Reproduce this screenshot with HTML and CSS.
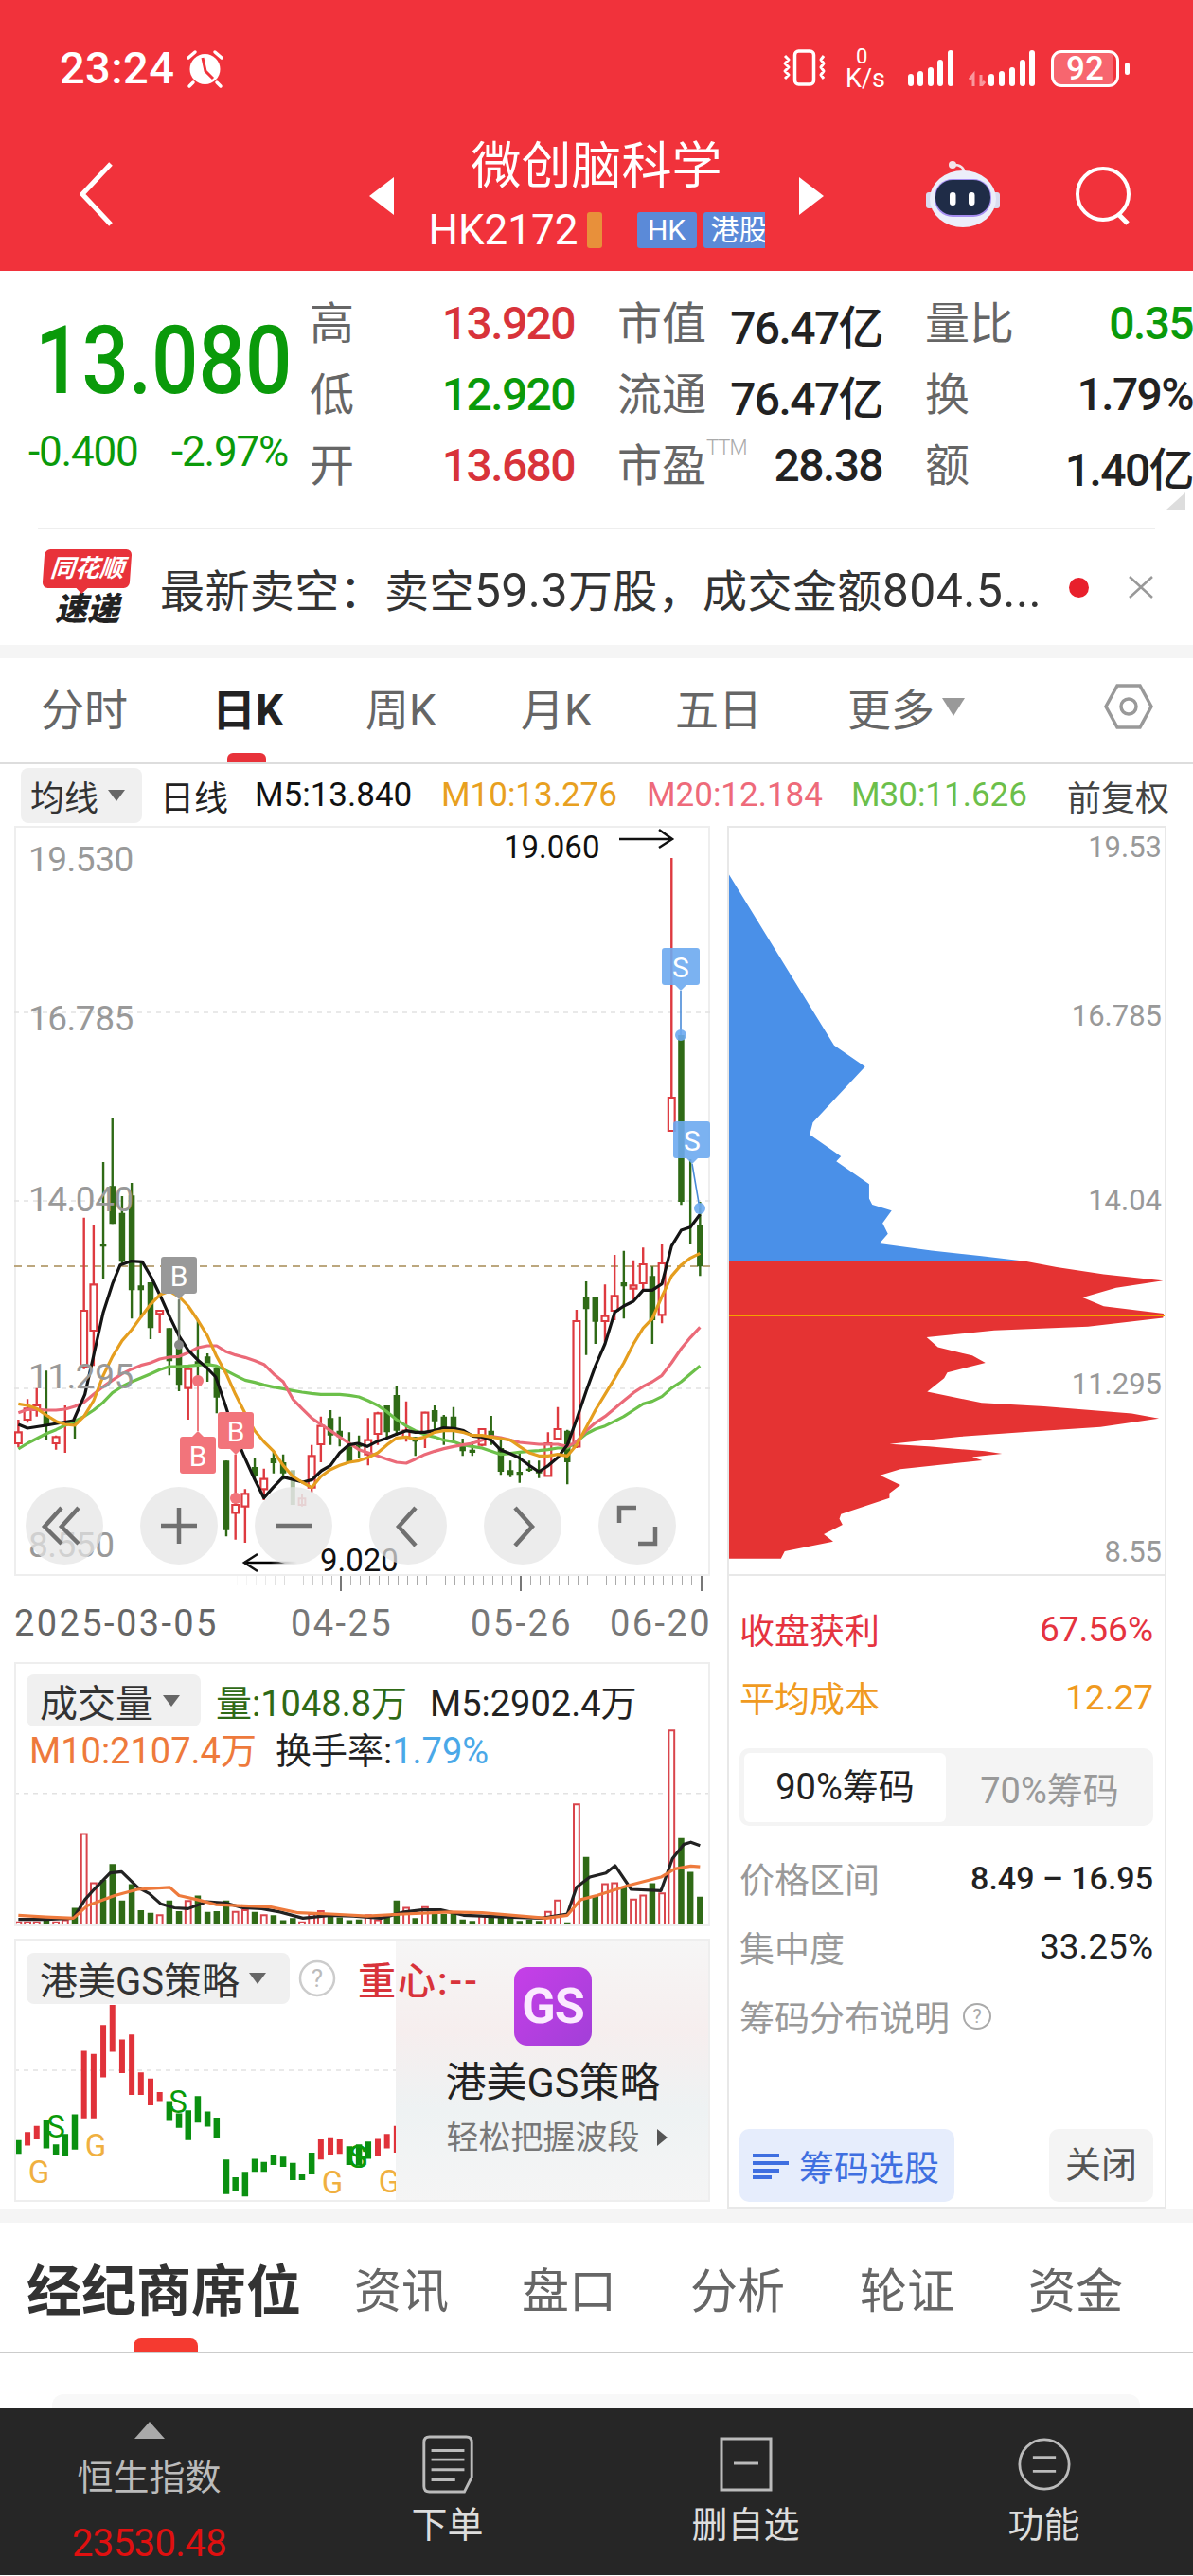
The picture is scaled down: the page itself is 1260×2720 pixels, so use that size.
FILE: index.html
```html
<!DOCTYPE html>
<html lang="zh">
<head>
  <meta charset="UTF-8">
  <title>微创脑科学 HK2172</title>
  <link rel="stylesheet" href="styles.css">
</head>
<body>
<div class="phone">

  <!-- red header -->
  <div class="header">
    <div class="status">
      <span class="time">23:24</span>
      <svg class="alarm" viewBox="0 0 42 42"><path d="M3 9L10 3M38 9L31 3M8 35L4 39M33 35L37 39" stroke="#fff" stroke-width="3.5" stroke-linecap="round" fill="none"/><circle cx="20.5" cy="21" r="16" fill="#fff"/><path d="M18 9L21 23L29 31" stroke="#f1323b" stroke-width="3" fill="none"/></svg>
      <svg class="vib" viewBox="0 0 48 39"><rect x="13.500" y="2" width="20" height="35" rx="4" fill="none" stroke="#fff" stroke-width="3.500"/><path d="M3 7L7 11L3 15L7 19L3 23L7 27L3 31M44 7L41 11L44 15L41 19L44 23L41 27L44 31" fill="none" stroke="#fff" stroke-width="3" stroke-linejoin="round"/></svg>
      <div class="speed"><span class="speed-num">0</span><span class="speed-unit">K/s</span></div>
      <svg class="sig1" viewBox="0 0 50 38"><path d="M4 35V28M14 35V25M25 35V21M35 35V13M46 35V3" stroke="#fff" stroke-width="6" stroke-linecap="round"/></svg>
      <svg class="sig2" viewBox="0 0 70 38"><path d="M5 38V26L1 31M13 26V38L17 33" fill="none" stroke="#f9989d" stroke-width="3"/><path d="M24 35V28M35 35V25M46 35V21M57 35V13M67 35V3" stroke="#fff" stroke-width="6" stroke-linecap="round"/></svg>
      <div class="battery"><span class="battery-num">92</span></div>
      <span class="battery-tip"></span>
    </div>
    <div class="titlebar">
      <svg class="back" viewBox="0 0 36 68"><path d="M33 2L3 34L33 66" fill="none" stroke="#fff" stroke-width="5"/></svg>
      <div class="stock">
        <span class="arrow-left"></span>
        <div class="stock-mid">
          <div class="stock-name">微创脑科学</div>
          <div class="stock-code">
            <span class="code">HK2172</span>
            <span class="tag-orange"></span>
            <span class="tag-blue">HK</span>
            <span class="tag-blue tag-cut"><span>港股</span></span>
          </div>
        </div>
        <span class="arrow-right"></span>
      </div>
      <svg class="robot" viewBox="0 0 78 70"><circle cx="28" cy="4" r="4" fill="#f3e6ea"/><path d="M30 4C36 4 40 7 41 13" fill="none" stroke="#f3e6ea" stroke-width="2.500"/><rect x="0" y="33" width="8" height="17" rx="3" fill="#d9dcf0"/><rect x="70" y="33" width="8" height="17" rx="3" fill="#d9dcf0"/><ellipse cx="39" cy="40" rx="35" ry="30" fill="#eceefa"/><rect x="9" y="19" width="60" height="40" rx="19" fill="#a58df0"/><rect x="10" y="20" width="58" height="37" rx="18" fill="#1f2c47"/><rect x="25" y="33" width="6.500" height="14" rx="3.200" fill="#fff"/><rect x="45" y="33" width="6.500" height="14" rx="3.200" fill="#fff"/></svg>
      <svg class="search" viewBox="0 0 63 62"><circle cx="30" cy="29" r="27" fill="none" stroke="#fff" stroke-width="4"/><path d="M46 50L56 60" stroke="#fff" stroke-width="5"/></svg>
    </div>
  </div>

  <!-- quote block -->
  <div class="quote">
    <div class="price-col">
      <div class="price">13.080</div>
      <div class="change"><span>-0.400</span><span>-2.97%</span></div>
    </div>
    <div class="quote-grid">
      <div class="cell"><span class="lb">高</span><span class="val red">13.920</span></div>
      <div class="cell"><span class="lb">市值</span><span class="val">76.47亿</span></div>
      <div class="cell"><span class="lb">量比</span><span class="val green">0.35</span></div>
      <div class="cell"><span class="lb">低</span><span class="val green">12.920</span></div>
      <div class="cell"><span class="lb">流通</span><span class="val">76.47亿</span></div>
      <div class="cell"><span class="lb">换</span><span class="val">1.79%</span></div>
      <div class="cell"><span class="lb">开</span><span class="val red">13.680</span></div>
      <div class="cell"><span class="lb">市盈<small class="ttm">TTM</small></span><span class="val">28.38</span></div>
      <div class="cell"><span class="lb">额</span><span class="val">1.40亿</span></div>
    </div>
    <span class="corner"></span>
  </div>

  <!-- news strip -->
  <div class="news">
    <div class="logo">
      <div class="logo-top">同花顺</div>
      <div class="logo-bottom">速递</div>
    </div>
    <div class="news-text">最新卖空：卖空<span class="news-num">59.3</span>万股，成交金额<span class="news-num">804.5...</span></div>
    <span class="dot"></span>
    <svg class="close" viewBox="0 0 28 24"><path d="M2 1L26 23M26 1L2 23" stroke="#999" stroke-width="2.5"/></svg>
  </div>
  <div class="band"></div>

  <!-- period tabs -->
  <div class="tabs">
    <span class="tab">分时</span>
    <span class="tab tab-on">日K</span>
    <span class="tab">周K</span>
    <span class="tab">月K</span>
    <span class="tab">五日</span>
    <span class="tab tab-more">更多<i class="tri-grey"></i></span>
    <svg class="hex" viewBox="0 0 52 50"><polygon points="14,3 38,3 50,25 38,47 14,47 2,25" fill="none" stroke="#999" stroke-width="3.5"/><circle cx="26" cy="25" r="8" fill="none" stroke="#999" stroke-width="3.5"/></svg>
    <span class="tab-bar"></span>
  </div>

  <!-- MA legend -->
  <div class="ma-row">
    <span class="pill pill-ma">均线<i class="tri-small"></i></span>
    <span class="ma-day">日线</span>
    <span class="ma-5">M5:13.840</span>
    <span class="ma-10">M10:13.276</span>
    <span class="ma-20">M20:12.184</span>
    <span class="ma-30">M30:11.626</span>
    <span class="ma-fq">前复权</span>
  </div>

  <div class="charts">
    <div class="left-col">

      <!-- candlestick chart -->
      <div class="kline">
        <svg class="layer line-layer" viewBox="31 -1191 1516 2376" preserveAspectRatio="none">
          <path class="grid" d="M31 -600H1547M31 -3H1547M31 591H1547"/>
          <path class="grid-price" d="M31 204H1547"/>
          <path class="wick-g" d="M101 535V755M163 690V750M225 -126V245M245 -264V70M266 -18V195M287 -60V370M307 190V365M328 255V435M369 400V550M390 310V600M431 375V570M452 480V570M472 520V670M493 820V1060M555 810V880M596 790V860M617 800V880M720 660V770M740 680V775M761 730V825M782 740V810M843 645V750M864 582V740M905 745V805M947 645V735M967 675V770M988 650V765M1008 750V805M1029 760V805M1070 678V770M1091 755V865M1112 820V872M1132 795V890M1153 820V855M1174 820V875M1236 722V895M1277 252V485M1297 300V450M1359 155V370M1421 205V450M1484 -528V10M1504 -135V135M1525 0V235"/>
          <path class="wick-r" d="M40 690V778M60 625V700M80 590V680M122 740V785M142 645V795M183 50V530M204 75V520M348 345V415M410 520V690M513 800V1070M534 910V1080M575 845V945M679 770V920M699 680V825M802 685V835M823 665V770M885 632V760M926 665V780M1050 718V775M1194 730V870M1215 650V755M1256 342V780M1318 262V445M1339 168V375M1380 185V310M1401 145V280M1442 135V385M1463 -1089V-225"/>
          <path class="body-g" d="M101 675V710M163 690V705M225 135V142M245 -50V70M266 35V190M287 -20V280M307 265V280M328 255V400M369 400V505M390 460V580M431 505V520M452 490V520M472 525V620M493 820V1040M555 840V870M596 810V828M617 825V860M720 685V740M740 725V745M761 775V825M782 770V776M843 645V730M864 612V725M905 745V760M947 660V695M967 680V720M988 680V725M1008 765V790M1029 785V795M1070 725V745M1091 780V855M1112 850V865M1132 855V865M1153 845V852M1174 850V860M1236 725V825M1277 300V340M1297 300V380M1359 255V268M1421 235V375M1484 -528V0M1525 75V205"/>
          <path class="body-r" d="M33 730H47V765H33ZM53 655H67V690H53ZM73 645H87V660H73ZM115 745H129V765H115ZM176 345H190V525H176ZM197 262H211V408H197ZM341 345H355V355H341ZM403 530H417V590H403ZM506 960H520V985H506ZM527 925H541V965H527ZM568 878H582V910H568ZM672 805H686V905H672ZM692 710H706V768H692ZM795 755H809V800H795ZM816 670H830V735H816ZM878 725H892V745H878ZM919 668H933V730H919ZM1043 720H1057V770H1043ZM1187 765H1201V868H1187ZM1208 720H1222V750H1208ZM1249 378H1263V775H1249ZM1311 362H1325V378H1311ZM1332 298H1346V345H1332ZM1373 265H1387V275H1373ZM1394 198H1408V258H1394ZM1435 195H1449V358H1435ZM1456 -330H1470V-225H1456Z"/>
          <path class="pale-g" d="M638 850V960"/>
          <path class="pale-r" d="M658 925V965M651 940H665V960H651Z"/>
          <path class="ln ln-30" d="M40 783L60 765 80 750 100 735 122 722 142 708 163 695 183 680 204 660 225 635 245 605 266 585 287 570 307 558 328 545 348 532 369 522 390 522 410 520 431 517 452 515 472 520 493 535 513 550 534 565 555 572 575 580 596 587 617 592 638 598 658 603 679 607 699 610 720 610 740 610 761 613 782 618 802 630 823 645 843 665 864 690 885 710 905 725 926 738 947 745 967 755 988 760 1008 770 1029 775 1050 780 1070 790 1091 800 1112 797 1132 793 1153 790 1174 788 1194 785 1215 780 1236 780 1256 760 1277 735 1297 720 1318 710 1339 695 1359 680 1380 660 1401 640 1421 632 1442 617 1463 590 1484 570 1504 545 1525 520"/>
          <path class="ln ln-20" d="M40 668L60 658 80 657 100 660 122 660 142 657 163 648 183 635 204 610 225 585 245 565 266 545 287 530 307 518 328 510 348 498 369 492 390 490 410 478 431 462 452 456 472 456 493 475 513 485 534 493 555 503 575 515 596 545 617 570 638 625 658 655 679 685 699 705 720 725 740 745 761 765 782 785 802 795 823 805 843 815 864 825 885 828 905 815 926 800 947 790 967 782 988 775 1008 770 1029 765 1050 755 1070 743 1091 747 1112 755 1132 762 1153 765 1174 768 1194 768 1215 768 1236 775 1256 760 1277 725 1297 700 1318 680 1339 655 1359 630 1380 605 1401 585 1421 570 1442 550 1463 510 1484 465 1504 430 1525 397"/>
          <path class="ln ln-5" d="M40 705L60 717 100 708 160 693 185 610 205 480 225 350 245 260 262 200 285 188 310 190 330 240 350 300 370 365 390 425 410 470 430 500 450 525 470 555 490 640 510 730 530 800 555 880 575 938 595 905 617 872 640 880 660 888 680 880 700 852 720 835 740 795 760 770 780 765 800 775 820 760 840 750 860 738 885 725 905 730 925 730 945 725 965 716 990 718 1010 725 1030 742 1050 745 1070 755 1090 785 1112 798 1130 810 1153 835 1174 855 1195 835 1215 810 1236 770 1256 690 1277 600 1297 520 1318 450 1339 350 1359 330 1380 315 1401 280 1421 280 1442 260 1463 140 1484 90 1504 80 1525 40"/>
          <path class="ln ln-10" d="M40 640L60 645 80 655 100 675 122 695 142 705 163 708 183 680 204 630 225 550 245 490 266 440 287 405 307 365 328 325 348 295 369 283 390 300 410 330 431 375 452 425 472 490 493 545 513 610 534 670 555 725 575 760 596 790 617 835 638 870 658 888 679 905 699 870 720 848 740 835 761 825 782 820 802 810 823 795 843 770 864 748 885 745 905 752 926 745 947 730 967 725 988 725 1008 730 1029 740 1050 740 1070 745 1091 750 1112 755 1132 775 1153 795 1174 805 1194 805 1215 800 1236 805 1256 770 1277 715 1297 660 1318 610 1339 560 1359 510 1380 450 1401 400 1421 370 1442 300 1463 235 1484 200 1504 178 1525 163"/>
        </svg>
        <svg class="layer" viewBox="15 873 735 792">
          <defs>
            <linearGradient id="fade" gradientUnits="userSpaceOnUse" x1="258" x2="314" y1="1651" y2="1651"><stop offset="0" stop-color="#000"/><stop offset=".5" stop-color="#000"/><stop offset="1" stop-color="#000" stop-opacity="0"/></linearGradient>
          </defs>
          <text class="axis-l" x="30" y="921">19.530</text>
          <text class="axis-l" x="30" y="1089">16.785</text>
          <text class="axis-l" x="30" y="1280">14.040</text>
          <text class="axis-l" x="30" y="1467">11.295</text>
          <text class="axis-l" x="30" y="1645">8.550</text>
          <text class="peak" x="532" y="907">19.060</text>
          <path class="arrow-line" d="M654 887H710M696 877L710 887 696 896"/>
          <text class="peak" x="338" y="1660">9.020</text>
          <path class="arrow-fade" d="M258 1651H314" stroke="url(#fade)"/>
          <path class="arrow-line" d="M272 1642L258 1651 272 1660"/>
          <path class="pin pin-grey" d="M189 1373V1421"/>
          <circle class="dot-grey" cx="189" cy="1421" r="5"/>
          <rect class="mk-grey" x="170" y="1328" width="38" height="39" rx="3"/>
          <polygon class="mk-grey" points="183,1367 195,1367 189,1373"/>
          <text class="mk-text" x="189" y="1359">B</text>
          <path class="pin pin-pink" d="M249 1537V1583M209 1512V1459"/>
          <circle class="mk-pink" cx="249" cy="1583" r="6"/>
          <circle class="mk-pink" cx="209" cy="1459" r="6"/>
          <rect class="mk-pink" x="230" y="1492" width="38" height="39" rx="3"/>
          <polygon class="mk-pink" points="243,1531 255,1531 249,1537"/>
          <text class="mk-text" x="249" y="1523">B</text>
          <rect class="mk-pink" x="190" y="1518" width="38" height="39" rx="3"/>
          <polygon class="mk-pink" points="203,1518 215,1518 209,1512"/>
          <text class="mk-text" x="209" y="1549">B</text>
          <path class="pin pin-blue" d="M719 1047V1094M731 1230L739 1277"/>
          <circle class="mk-blue" cx="719" cy="1094" r="6"/>
          <circle class="mk-blue" cx="739" cy="1277" r="6"/>
          <rect class="mk-blue" x="699" y="1002" width="40" height="39" rx="3"/>
          <polygon class="mk-blue" points="713,1041 725,1041 719,1047"/>
          <text class="mk-text" x="719" y="1033">S</text>
          <rect class="mk-blue" x="711" y="1185" width="39" height="39" rx="3"/>
          <polygon class="mk-blue" points="725,1224 737,1224 731,1230"/>
          <text class="mk-text" x="731" y="1216">S</text>
        </svg>
        <div class="zoom-btns">
          <span class="zbtn"><svg viewBox="0 0 82 82"><path d="M38 22L20 42 38 60M56 22L38 42 56 60"/></svg></span>
          <span class="zbtn"><svg viewBox="0 0 82 82"><path d="M41 22V60M22 41H60"/></svg></span>
          <span class="zbtn"><svg viewBox="0 0 82 82"><path d="M22 41H60"/></svg></span>
          <span class="zbtn"><svg viewBox="0 0 82 82"><path d="M49 22L31 42 49 62"/></svg></span>
          <span class="zbtn"><svg viewBox="0 0 82 82"><path d="M33 22L51 42 33 62"/></svg></span>
          <span class="zbtn"><svg viewBox="0 0 82 82"><path d="M22 38V22H40M60 42V60H42"/></svg></span>
        </div>
      </div>

      <!-- date axis -->
      <div class="ruler">
        <span class="ruler-ticks"></span>
        <i class="major major-1"></i><i class="major major-2"></i><i class="major major-3"></i>
      </div>
      <div class="dates">
        <span class="date-first">2025-03-05</span>
        <span>04-25</span>
        <span>05-26</span>
        <span>06-20</span>
      </div>

      <!-- volume -->
      <div class="panel panel-vol">
        <svg class="layer" viewBox="31 221 1516 644" preserveAspectRatio="none">
          <path class="grid" d="M31 541H1547"/>
          <path class="vol-g" d="M101 850V865M163 820V865M225 752V865M245 713V865M266 802V865M287 762V865M307 826V865M328 832V865M369 802V865M390 828V865M431 790V865M452 830V865M472 828V865M493 802V865M555 830V865M596 838V865M617 850V865M638 845V865M720 840V865M740 843V865M761 850V865M782 848V865M843 838V865M864 802V865M905 845V865M947 835V865M967 835V865M988 830V865M1008 848V865M1029 852V865M1070 840V865M1091 840V865M1112 845V865M1132 852V865M1153 848V865M1174 852V865M1236 855V865M1277 696V865M1297 790V865M1359 768V865M1421 760V865M1484 650V865M1504 732V865M1525 793V865"/>
          <path class="vol-r" d="M34 855H46V864H34ZM54 855H66V864H54ZM74 855H86V864H74ZM116 855H128V864H116ZM136 850H148V864H136ZM177 640H189V864H177ZM198 760H210V864H198ZM342 838H354V864H342ZM404 803H416V864H404ZM507 830H519V864H507ZM528 826H540V864H528ZM569 838H581V864H569ZM652 855H664V864H652ZM673 835H685V864H673ZM693 828H705V864H693ZM796 838H808V864H796ZM817 850H829V864H817ZM879 820H891V864H879ZM920 818H932V864H920ZM1044 840H1056V864H1044ZM1188 830H1200V864H1188ZM1209 802H1221V864H1209ZM1250 568H1262V864H1250ZM1312 762H1324V864H1312ZM1333 760H1345V864H1333ZM1374 800H1386V864H1374ZM1395 790H1407V864H1395ZM1436 785H1448V864H1436ZM1457 388H1469V864H1457Z"/>
          <path class="ln vol-5" d="M40 848L100 848 160 845 185 800 205 775 240 735 265 732 300 770 325 785 350 810 380 820 410 822 450 805 490 808 530 820 570 822 610 830 660 845 720 838 770 840 830 845 880 830 920 825 960 825 1010 838 1100 842 1180 845 1236 835 1256 770 1285 745 1320 735 1340 717 1375 775 1440 778 1465 700 1490 665 1505 660 1525 668"/>
          <path class="ln vol-10" d="M40 838L100 842 160 845 190 815 250 790 300 775 370 770 390 790 430 800 470 812 530 815 590 818 650 832 720 835 800 840 880 835 980 830 1050 832 1190 845 1236 838 1265 800 1300 790 1370 765 1440 745 1470 725 1505 718 1525 720"/>
        </svg>
        <div class="panel-head">
          <span class="pill pill-vol">成交量<i class="tri-small"></i></span>
          <span class="v-now">量:1048.8万</span>
          <span class="v-m5">M5:2902.4万</span>
        </div>
        <div class="panel-head2">
          <span class="v-m10">M10:2107.4万</span>
          <span class="v-turn">换手率:<b>1.79%</b></span>
        </div>
      </div>

      <!-- GS strategy -->
      <div class="panel panel-gs">
        <svg class="layer" viewBox="31 895 1516 640" preserveAspectRatio="none">
          <path class="grid" d="M31 1215H1547"/>
          <path class="gs-g" d="M40 1385V1418M101 1335V1405M122 1395V1420M142 1370V1422M163 1322V1408M369 1290V1338M390 1320V1355M410 1312V1385M431 1278V1342M452 1315V1352M472 1330V1380M493 1432V1516M513 1475V1508M534 1462V1522M555 1430V1462M575 1438V1462M596 1420V1445M617 1425V1450M638 1440V1482M658 1468V1482M679 1415V1468M761 1400V1445M782 1395V1445M802 1388V1430"/>
          <path class="gs-r" d="M60 1365V1398M80 1350V1383M183 1168V1332M204 1175V1332M225 1105V1232M245 1056V1170M266 1140V1222M287 1128V1275M307 1220V1275M328 1235V1300M348 1268V1290M699 1383V1432M720 1378V1420M740 1383V1418M823 1382V1422M843 1370V1405M864 1350V1415"/>
        </svg>
        <svg class="layer" viewBox="15 2048 735 278">
          <text class="pin-s" x="59" y="2258">S</text>
          <text class="pin-s" x="188" y="2232">S</text>
          <text class="pin-s" x="378" y="2290">S</text>
          <text class="pin-g" x="378" y="2290">G</text>
          <text class="pin-go" x="41" y="2306">G</text>
          <text class="pin-go" x="101" y="2278">G</text>
          <text class="pin-go" x="351" y="2317">G</text>
          <text class="pin-go" x="411" y="2316">G</text>
        </svg>
        <div class="gs-cover">
          <div class="gs-icon">GS</div>
          <div class="gs-name">港美GS策略</div>
          <div class="gs-sub">轻松把握波段<i class="tri-right"></i></div>
        </div>
        <div class="panel-head">
          <span class="pill pill-gs">港美GS策略<i class="tri-small"></i></span>
          <svg class="help" viewBox="0 0 40 40"><circle cx="20" cy="20" r="18" fill="none" stroke="#ccc" stroke-width="2.5"/><text x="20" y="29" class="help-q">?</text></svg>
          <span class="g-core">重心:--</span>
        </div>
      </div>
    </div>

    <!-- chip distribution -->
    <div class="right-col">
      <div class="chips">
        <svg class="layer chips-svg" viewBox="52 24 1393 1552" preserveAspectRatio="none">
          <polygon class="chip-blue" points="52,125 380,470 388,478 487,522 320,638 310,663 410,708 395,718 500,765 500,795 510,808 572,820 543,846 560,868 533,888 700,903 860,914 1000,925 52,925"/>
          <polygon class="chip-red" points="52,925 1000,925 1100,937 1250,952 1440,965 1290,980 1183,1000 1250,1018 1442,1033 1440,1042 1200,1060 900,1068 684,1082 720,1103 830,1120 872,1135 750,1155 740,1167 686,1195 860,1218 1060,1225 1340,1240 1427,1250 1240,1268 1000,1278 790,1288 565,1303 690,1308 870,1318 925,1323 830,1330 862,1337 600,1355 535,1368 600,1388 565,1405 565,1415 410,1448 405,1458 415,1470 355,1490 385,1505 230,1525 218,1540 52,1540"/>
          <path class="chip-avg" d="M52 1037H1445"/>
        </svg>
        <span class="chip-l chip-l1">19.53</span>
        <span class="chip-l chip-l2">16.785</span>
        <span class="chip-l chip-l3">14.04</span>
        <span class="chip-l chip-l4">11.295</span>
        <span class="chip-l chip-l5">8.55</span>
      </div>
      <div class="chip-info">
        <div class="row row-red"><span>收盘获利</span><span>67.56%</span></div>
        <div class="row row-orange"><span>平均成本</span><span>12.27</span></div>
        <div class="seg">
          <span class="seg-on">90%筹码</span>
          <span class="seg-off">70%筹码</span>
        </div>
        <div class="row row-grey"><span>价格区间</span><b>8.49 – 16.95</b></div>
        <div class="row row-grey"><span>集中度</span><em>33.25%</em></div>
        <div class="row row-grey row-note"><span>筹码分布说明</span>
          <svg class="help-small" viewBox="0 0 32 30"><ellipse cx="16" cy="15" rx="14" ry="13" fill="none" stroke="#aaa" stroke-width="2"/><text x="16" y="22" class="help-q2">?</text></svg>
        </div>
        <div class="chip-btns">
          <span class="btn-pick"><svg viewBox="0 0 38 28"><path d="M0 3H28M0 11H38M0 19H28M0 26H20" stroke="#3f6fe0" stroke-width="4"/></svg>筹码选股</span>
          <span class="btn-close">关闭</span>
        </div>
      </div>
    </div>
  </div>

  <div class="band band-2"></div>

  <!-- lower tabs -->
  <div class="subtabs">
    <span class="sub-on">经纪商席位</span>
    <span>资讯</span>
    <span>盘口</span>
    <span>分析</span>
    <span>轮证</span>
    <span>资金</span>
    <i class="sub-bar"></i>
  </div>
  <div class="lower"><div class="lower-card"></div></div>

  <!-- bottom nav -->
  <div class="nav">
    <div class="nav-item">
      <span class="nav-up"></span>
      <span class="nav-index">恒生指数</span>
      <span class="nav-num">23530.48</span>
    </div>
    <div class="nav-item nav-btn">
      <svg viewBox="0 0 56 64"><path d="M8 2H48Q54 2 54 8V46L46 62H8Q2 62 2 56V8Q2 2 8 2Z" fill="none" stroke="#bbb" stroke-width="3"/><path d="M10 17H46M10 27H46M10 38H46M10 49H36" stroke="#bbb" stroke-width="3"/></svg>
      <span>下单</span>
    </div>
    <div class="nav-item nav-btn">
      <svg viewBox="0 0 56 58"><rect x="2" y="2" width="52" height="54" fill="none" stroke="#bbb" stroke-width="3"/><path d="M15 28H41" stroke="#bbb" stroke-width="3"/></svg>
      <span>删自选</span>
    </div>
    <div class="nav-item nav-btn">
      <svg viewBox="0 0 60 60"><circle cx="30" cy="30" r="28" fill="none" stroke="#bbb" stroke-width="3"/><path d="M17 22H43M17 38H43" stroke="#bbb" stroke-width="3"/></svg>
      <span>功能</span>
    </div>
  </div>
</div>
</body>
</html>
```

FILE: styles.css
```css
* {
  box-sizing: border-box;
}
body {
  margin: 0;
  background: #fff;
  font-family: Roboto, "Noto Sans CJK SC", sans-serif;
  color: #222;
}
i, em {
  font-style: normal;
}
.phone {
  width: 1260px;
  height: 2720px;
  overflow: hidden;
  position: relative;
}

/* header */
.header {
  height: 286px;
  background: #f1323b;
  color: #fff;
}
.status {
  height: 130px;
  display: flex;
  align-items: flex-start;
  padding: 50px 0 0 63px;
}
.time {
  font-size: 47px;
  line-height: 44px;
  font-weight: 500;
  letter-spacing: .4px;
  width: 133px;
}
.alarm {
  width: 42px;
  height: 42px;
  margin-top: 2px;
}
.vib {
  width: 48px;
  height: 39px;
  margin: 2px 0 0 588px;
}
.speed {
  width: 40px;
  height: 44px;
  margin-left: 18px;
  position: relative;
}
.speed-num {
  position: absolute;
  left: 12px;
  top: 0;
  font-size: 22px;
  line-height: 20px;
}
.speed-unit {
  position: absolute;
  left: 1px;
  top: 22px;
  font-size: 27px;
  line-height: 22px;
}
.sig1 {
  width: 50px;
  height: 38px;
  margin: 3px 0 0 26px;
}
.sig2 {
  width: 70px;
  height: 38px;
  margin: 3px 0 0 15px;
}
.battery {
  width: 72px;
  height: 39px;
  margin: 3px 0 0 17px;
  border: 3px solid #fff;
  border-radius: 11px;
  background: linear-gradient(90deg, #f7666f 94%, #f1323b 94%);
  text-align: center;
}
.battery-num {
  font-size: 35px;
  line-height: 33px;
  font-weight: 500;
  display: block;
}
.battery-tip {
  width: 5px;
  height: 13px;
  margin: 16px 0 0 6px;
  background: #fff;
  border-radius: 3px;
}
.titlebar {
  height: 156px;
  display: flex;
  align-items: flex-start;
  padding-left: 84px;
}
.back {
  width: 36px;
  height: 68px;
  margin-top: 41px;
}
.stock {
  width: 480px;
  margin-left: 270px;
  display: flex;
  align-items: flex-start;
}
.arrow-left, .arrow-right {
  width: 0;
  height: 0;
  margin-top: 57px;
  border-top: 20px solid transparent;
  border-bottom: 20px solid transparent;
}
.arrow-left {
  border-right: 26px solid #fff;
}
.arrow-right {
  border-left: 26px solid #fff;
}
.stock-mid {
  flex: 1;
  display: flex;
  flex-direction: column;
  align-items: center;
  position: relative;
}
.stock-name {
  font-size: 53px;
  line-height: 60px;
  height: 78px;
  margin-top: 16px;
}
.stock-code {
  display: flex;
  align-items: center;
  height: 38px;
  width: 355px;
}
.code {
  font-size: 44px;
  width: 167px;
}
.tag-orange {
  width: 16px;
  height: 38px;
  background: #e8903a;
  border-radius: 3px;
  margin-right: 37px;
}
.tag-blue {
  width: 63px;
  height: 38px;
  background: #5b8ad8;
  border-radius: 3px;
  font-size: 30px;
  line-height: 38px;
  text-align: center;
  margin-right: 7px;
}
.tag-cut {
  width: 65px;
  overflow: hidden;
  margin-right: 0;
  border-radius: 3px 0 0 3px;
  text-align: left;
  padding-left: 8px;
  white-space: nowrap;
}
.robot {
  width: 78px;
  height: 70px;
  margin: 40px 0 0 108px;
}
.search {
  width: 63px;
  height: 62px;
  margin: 46px 0 0 79px;
}

/* quote */
.quote {
  height: 271px;
  display: flex;
  position: relative;
}
.price-col {
  width: 327px;
  flex: none;
}
.price {
  font-size: 100px;
  line-height: 100px;
  font-weight: 500;
  color: #0a9a0a;
  margin: 45px 0 0 37px;
  transform: scaleX(.87);
  transform-origin: left;
}
.change {
  display: grid;
  grid-template-columns: 151px auto;
  margin: 23px 0 0 30px;
  font-size: 44px;
  line-height: 46px;
  color: #0a9a0a;
  letter-spacing: -1.2px;
  white-space: nowrap;
}
.quote-grid {
  display: grid;
  grid-template-columns: 280px 280px 283px;
  grid-auto-rows: 75px;
  column-gap: 45px;
  padding-top: 18px;
}
.cell {
  display: flex;
  justify-content: space-between;
  align-items: center;
}
.lb {
  font-size: 47px;
  color: #666;
  display: flex;
  align-items: flex-start;
  margin-top: -8px;
}
.ttm {
  font-size: 22px;
  color: #aaa;
  font-weight: 300;
  line-height: 40px;
  letter-spacing: -1px;
}
.val {
  font-size: 48px;
  color: #222;
  letter-spacing: -1.6px;
  font-weight: 500;
  white-space: nowrap;
}
.val.red {
  color: #d8333a;
}
.val.green {
  color: #0a9a0a;
}
.corner {
  position: absolute;
  right: 8px;
  top: 234px;
  width: 0;
  height: 0;
  border-left: 20px solid transparent;
  border-bottom: 18px solid #ddd;
}

/* news */
.news {
  height: 124px;
  margin: 0 40px;
  border-top: 2px solid #eee;
  display: flex;
  align-items: center;
}
.logo {
  width: 92px;
  margin-left: 6px;
  text-align: center;
  position: relative;
}
.logo-top {
  background: #e8323a;
  color: #fff;
  font-size: 26px;
  line-height: 41px;
  height: 41px;
  font-weight: 700;
  font-style: italic;
  border-radius: 6px;
  transform: skewX(-4deg);
  white-space: nowrap;
}
.logo-top::after {
  content: "";
  position: absolute;
  left: 36px;
  top: 41px;
  border-left: 6px solid transparent;
  border-right: 6px solid transparent;
  border-top: 6px solid #e8323a;
}
.logo-bottom {
  font-size: 34px;
  line-height: 36px;
  margin-top: 4px;
  font-weight: 900;
  font-style: italic;
  color: #222;
}
.news-text {
  font-size: 47px;
  margin-left: 31px;
  color: #333;
  white-space: nowrap;
  width: 960px;
  letter-spacing: .4px;
}
.news-num {
  font-size: 50px;
}
.dot {
  width: 21px;
  height: 21px;
  border-radius: 50%;
  background: #e8202c;
  flex: none;
}
.close {
  width: 28px;
  height: 24px;
  margin-left: 41px;
  flex: none;
}
.band {
  height: 14px;
  background: #f5f5f5;
}

/* period tabs */
.tabs {
  height: 112px;
  display: grid;
  grid-template-columns: 181px 162px 164px 163px 182px 271px 52px;
  align-items: center;
  padding: 0 0 8px 43px;
  border-bottom: 2px solid #ddd;
  position: relative;
  font-size: 46px;
  color: #666;
}
.tab-on {
  color: #222;
  font-weight: 700;
}
.tab-more {
  display: flex;
  align-items: center;
}
.tri-grey {
  margin-left: 8px;
  border-left: 12px solid transparent;
  border-right: 12px solid transparent;
  border-top: 19px solid #999;
}
.hex {
  width: 52px;
  height: 50px;
}
.tab-bar {
  position: absolute;
  left: 240px;
  bottom: 0;
  width: 41px;
  height: 10px;
  background: #e8323a;
  border-radius: 6px 6px 0 0;
}

/* MA legend */
.ma-row {
  height: 65px;
  display: flex;
  align-items: center;
  padding-left: 22px;
  font-size: 35px;
  white-space: nowrap;
}
.pill {
  background: #f0f0f0;
  border-radius: 8px;
  display: flex;
  align-items: center;
  color: #333;
  white-space: nowrap;
}
.pill-ma {
  width: 128px;
  height: 58px;
  padding-left: 10px;
  font-size: 36px;
  flex: none;
}
.tri-small {
  margin-left: 10px;
  border-left: 9px solid transparent;
  border-right: 9px solid transparent;
  border-top: 12px solid #666;
}
.ma-day {
  margin-left: 19px;
  width: 100px;
  color: #222;
  font-size: 36px;
}
.ma-5 {
  width: 197px;
  color: #111;
}
.ma-10 {
  width: 217px;
  color: #e8a020;
}
.ma-20 {
  width: 216px;
  color: #ee6a7a;
}
.ma-30 {
  width: 228px;
  color: #6cbf4b;
}
.ma-fq {
  font-size: 36px;
  color: #444;
}

/* charts */
.charts {
  height: 1461px;
  display: flex;
  padding-left: 15px;
  gap: 18px;
}
.left-col {
  width: 735px;
  flex: none;
}
.layer {
  position: absolute;
  left: -2px;
  top: -2px;
  width: 735px;
  height: 792px;
}
.kline {
  height: 792px;
  position: relative;
  border: 2px solid #eee;
}
.line-layer path, .panel .layer path, .chips-svg path {
  vector-effect: non-scaling-stroke;
  fill: none;
}
.grid {
  stroke: #e2e2e2;
  stroke-width: 1.5;
  stroke-dasharray: 5 5;
}
.grid-price {
  stroke: #bca77e;
  stroke-width: 2;
  stroke-dasharray: 8 6;
}
.wick-g {
  stroke: #2f6a16;
  stroke-width: 2.4;
}
.wick-r {
  stroke: #de3a40;
  stroke-width: 2.4;
}
.body-g {
  stroke: #2f6a16;
  stroke-width: 6.5;
}
.line-layer .body-r {
  fill: #fff;
  stroke: #de3a40;
  stroke-width: 2.2;
}
.pale-g {
  stroke: #a9bfa0;
  stroke-width: 5;
}
.pale-r {
  stroke: #eaa3a6;
  stroke-width: 2;
}
.ln {
  stroke-width: 3.2;
  stroke-linejoin: round;
}
.ln-5 {
  stroke: #141414;
}
.ln-10 {
  stroke: #e59e1f;
}
.ln-20 {
  stroke: #eb6a78;
}
.ln-30 {
  stroke: #6cc04a;
}
.axis-l {
  font-size: 37px;
  fill: #999;
  letter-spacing: -.5px;
}
.peak {
  font-size: 33px;
  fill: #111;
}
.arrow-line {
  fill: none;
  stroke: #111;
  stroke-width: 2.5;
}
.arrow-fade {
  fill: none;
  stroke-width: 2.5;
}
.pin {
  fill: none;
  stroke-width: 1.6;
}
.pin-grey {
  stroke: #888;
}
.pin-pink {
  stroke: #ea5a62;
}
.pin-blue {
  stroke: #4a8bd8;
}
.dot-grey {
  fill: #888;
}
.mk-grey {
  fill: #999;
}
.mk-pink {
  fill: #f2747b;
}
.mk-blue {
  fill: #6daaf0;
  fill-opacity: .9;
}
.mk-text {
  font-size: 30px;
  fill: #fff;
  text-anchor: middle;
}
.zoom-btns {
  position: absolute;
  left: 10px;
  top: 696px;
  display: flex;
  gap: 39px;
}
.zbtn {
  width: 82px;
  height: 82px;
  border-radius: 50%;
  background: rgba(228, 228, 228, .72);
}
.zbtn svg {
  display: block;
  fill: none;
  stroke: #707070;
  stroke-width: 4.5;
}
.ruler {
  height: 17px;
  position: relative;
}
.ruler-ticks {
  position: absolute;
  left: 225px;
  right: 8px;
  top: 0;
  height: 10px;
  background: repeating-linear-gradient(90deg, #aaa 0 1px, transparent 1px 10px);
  -webkit-mask-image: linear-gradient(90deg, transparent, #000 30%);
  mask-image: linear-gradient(90deg, transparent, #000 30%);
}
.major {
  position: absolute;
  top: 0;
  width: 2px;
  height: 16px;
  background: #777;
}
.major-1 {
  left: 344px;
}
.major-2 {
  left: 534px;
}
.major-3 {
  left: 725px;
}
.dates {
  height: 74px;
  display: grid;
  grid-template-columns: 292px 190px 147px 1fr;
  align-items: start;
  font-size: 38px;
  line-height: 44px;
  letter-spacing: 2.4px;
  color: #777;
  white-space: nowrap;
  padding-top: 11px;
}
.date-first {
  color: #666;
}
.panel {
  position: relative;
  border: 2px solid #eee;
  width: 735px;
  overflow: hidden;
}
.panel-vol {
  height: 279px;
}
.panel-vol .layer {
  height: 279px;
}
.panel-gs {
  height: 278px;
  margin-top: 13px;
}
.panel-gs .layer {
  height: 278px;
}
.vol-g, .gs-g {
  stroke: #2f6a16;
  stroke-width: 6.5;
}
.gs-g {
  stroke: #0a9010;
}
.gs-r {
  stroke: #e0323a;
  stroke-width: 6;
}
.panel .layer .vol-r {
  fill: #fff;
  stroke: #d9454c;
  stroke-width: 2;
}
.vol-5 {
  stroke: #222;
}
.vol-10 {
  stroke: #ee7a3c;
}
.panel-head, .panel-head2 {
  position: relative;
  display: flex;
  align-items: center;
  font-size: 38px;
  white-space: nowrap;
}
.panel-head {
  padding: 11px 0 0 11px;
}
.pill-vol {
  width: 184px;
  height: 55px;
  padding-left: 14px;
  font-size: 40px;
  flex: none;
}
.pill-vol .tri-small, .pill-gs .tri-small {
  margin-left: 10px;
}
.v-now {
  margin-left: 16px;
  width: 226px;
  color: #2f6a16;
}
.v-m5 {
  color: #222;
}
.panel-head2 {
  padding-left: 14px;
  margin-top: -5px;
}
.v-m10 {
  width: 260px;
  color: #ee7a3c;
}
.v-turn {
  color: #222;
}
.v-turn b {
  font-weight: 400;
  color: #4aa8e8;
}
.pill-gs {
  width: 278px;
  height: 54px;
  padding-left: 14px;
  font-size: 40px;
  flex: none;
}
.help {
  width: 40px;
  height: 40px;
  margin-left: 9px;
}
.help-q {
  font-size: 26px;
  fill: #bbb;
  text-anchor: middle;
}
.g-core {
  margin-left: 23px;
  color: #d8333a;
  font-weight: 500;
  font-size: 40px;
  letter-spacing: 2px;
}
.pin-s {
  font-size: 33px;
  fill: #0a9a0a;
  text-anchor: middle;
}
.pin-g {
  font-size: 33px;
  fill: #0a9a0a;
  text-anchor: middle;
}
.pin-go {
  font-size: 33px;
  fill: #f0b040;
  text-anchor: middle;
}
.gs-cover {
  position: absolute;
  right: -2px;
  top: -2px;
  width: 332px;
  height: 278px;
  background: linear-gradient(180deg, #f6f6f6 0%, #f6eeee 35%, #eef2f3 65%, #f5f5f5 100%);
  display: flex;
  flex-direction: column;
  align-items: center;
  padding-top: 30px;
}
.gs-icon {
  width: 82px;
  height: 83px;
  border-radius: 14px;
  background: linear-gradient(135deg, #c63fe8, #a23fd8);
  color: #fbeaff;
  font-size: 52px;
  font-weight: 700;
  line-height: 83px;
  text-align: center;
  letter-spacing: -1px;
}
.gs-name {
  font-size: 43px;
  line-height: 50px;
  margin-top: 14px;
  color: #222;
}
.gs-sub {
  font-size: 34px;
  line-height: 40px;
  margin-top: 13px;
  color: #777;
  display: flex;
  align-items: center;
  padding-left: 8px;
}
.tri-right {
  margin-left: 18px;
  border-top: 9px solid transparent;
  border-bottom: 9px solid transparent;
  border-left: 11px solid #555;
}

/* chip distribution */
.right-col {
  width: 464px;
  flex: none;
  height: 1460px;
  border: 2px solid #e8e8e8;
  display: flex;
  flex-direction: column;
}
.chips {
  height: 790px;
  position: relative;
  border-bottom: 2px solid #e8e8e8;
  flex: none;
}
.chips-svg {
  left: 0;
  top: -2px;
  width: 460px;
  height: 792px;
}
.chip-blue {
  fill: #4a90e8;
}
.chip-red {
  fill: #e53333;
}
.chips-svg .chip-avg {
  stroke: #f5a000;
  stroke-width: 2;
}
.chip-l {
  position: absolute;
  right: 3px;
  font-size: 31px;
  line-height: 36px;
  color: #999;
}
.chip-l1 {
  top: 3px;
}
.chip-l2 {
  top: 181px;
}
.chip-l3 {
  top: 376px;
}
.chip-l4 {
  top: 570px;
}
.chip-l5 {
  top: 747px;
}
.chip-info {
  flex: 1;
  display: flex;
  flex-direction: column;
  padding: 20px 12px 5px 11px;
}
.row {
  height: 72px;
  flex: none;
  display: flex;
  justify-content: space-between;
  align-items: center;
  font-size: 37px;
  white-space: nowrap;
}
.row-red {
  color: #e5333f;
}
.row-orange {
  color: #f09a20;
}
.row-grey {
  height: 73px;
  color: #999;
}
.row-grey b {
  color: #222;
  font-size: 34px;
  font-weight: 500;
}
.row-grey em {
  color: #222;
}
.row-note {
  justify-content: flex-start;
  gap: 13px;
}
.help-small {
  width: 32px;
  height: 30px;
}
.help-q2 {
  font-size: 20px;
  fill: #aaa;
  text-anchor: middle;
}
.seg {
  height: 82px;
  flex: none;
  margin: 18px 0;
  background: #f4f4f4;
  border-radius: 10px;
  display: flex;
  align-items: center;
  padding-left: 5px;
  font-size: 38px;
  white-space: nowrap;
}
.seg-on {
  width: 213px;
  height: 73px;
  line-height: 73px;
  text-align: center;
  background: #fff;
  border-radius: 6px;
}
.seg-off {
  width: 219px;
  text-align: center;
  color: #999;
}
.chip-btns {
  margin-top: auto;
  display: flex;
  justify-content: space-between;
  height: 77px;
}
.btn-pick {
  width: 227px;
  background: #e6edfc;
  border-radius: 10px;
  display: flex;
  align-items: center;
  padding-left: 14px;
  color: #3f6fe0;
  font-size: 37px;
  white-space: nowrap;
}
.btn-pick svg {
  width: 38px;
  height: 28px;
  margin-right: 11px;
}
.btn-close {
  width: 110px;
  background: #f4f4f4;
  border-radius: 10px;
  text-align: center;
  line-height: 77px;
  color: #555;
  font-size: 38px;
}

/* lower tabs */
.subtabs {
  height: 138px;
  display: grid;
  grid-template-columns: 346px 177px 178px 179px 178px 1fr;
  align-items: center;
  padding: 0 0 0 28px;
  border-bottom: 2px solid #ccc;
  position: relative;
  font-size: 50px;
  color: #666;
}
.sub-on {
  font-size: 58px;
  font-weight: 700;
  color: #333;
  white-space: nowrap;
}
.sub-bar {
  position: absolute;
  left: 141px;
  bottom: 0;
  width: 68px;
  height: 14px;
  background: #f53a30;
  border-radius: 8px 8px 0 0;
}
.lower {
  height: 58px;
  padding: 43px 56px 0 55px;
}
.lower-card {
  height: 15px;
  background: #f8f8f8;
  border-radius: 12px 12px 0 0;
}

/* bottom nav */
.nav {
  height: 176px;
  background: #262626;
  display: grid;
  grid-template-columns: repeat(4, 315px);
}
.nav-item {
  display: flex;
  flex-direction: column;
  align-items: center;
}
.nav-up {
  margin-top: 14px;
  border-left: 16px solid transparent;
  border-right: 16px solid transparent;
  border-bottom: 18px solid #aaa;
}
.nav-index {
  font-size: 38px;
  line-height: 46px;
  margin-top: 18px;
  color: #bbb;
}
.nav-num {
  font-size: 40px;
  line-height: 46px;
  margin-top: 24px;
  color: #e01010;
  letter-spacing: -.6px;
}
.nav-btn {
  padding-top: 28px;
  color: #ddd;
  font-size: 38px;
  line-height: 46px;
}
.nav-btn svg {
  width: 56px;
  height: 62px;
  margin-bottom: 10px;
}
```
